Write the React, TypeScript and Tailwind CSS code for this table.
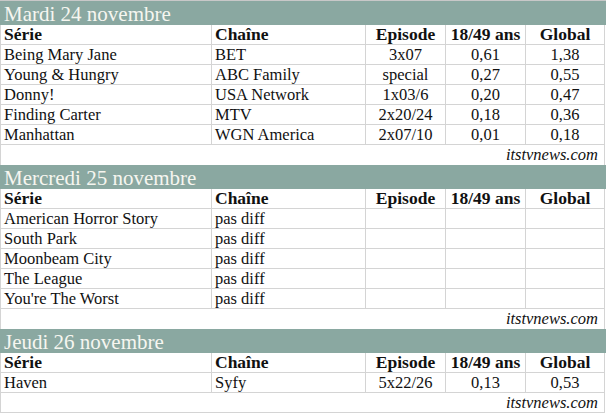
// Audiences US — three day tables (série, chaîne, épisode, 18/49, global)

type Row = { serie: string; chaine: string; ep: string; demo: string; global: string }

interface Day {
  title: string
  rows:  Row[]
}

const days: Day[] = [
  {
    title: 'Mardi 24 novembre',
    rows: [
      { serie: 'Being Mary Jane', chaine: 'BET',         ep: '3x07',    demo: '0,61', global: '1,38' },
      { serie: 'Young & Hungry',  chaine: 'ABC Family',  ep: 'special', demo: '0,27', global: '0,55' },
      { serie: 'Donny!',          chaine: 'USA Network', ep: '1x03/6',  demo: '0,20', global: '0,47' },
      { serie: 'Finding Carter',  chaine: 'MTV',         ep: '2x20/24', demo: '0,18', global: '0,36' },
      { serie: 'Manhattan',       chaine: 'WGN America', ep: '2x07/10', demo: '0,01', global: '0,18' },
    ],
  },
  {
    title: 'Mercredi 25 novembre',
    rows: [
      { serie: 'American Horror Story', chaine: 'pas diff', ep: '', demo: '', global: '' },
      { serie: 'South Park',            chaine: 'pas diff', ep: '', demo: '', global: '' },
      { serie: 'Moonbeam City',         chaine: 'pas diff', ep: '', demo: '', global: '' },
      { serie: 'The League',            chaine: 'pas diff', ep: '', demo: '', global: '' },
      { serie: "You're The Worst",      chaine: 'pas diff', ep: '', demo: '', global: '' },
    ],
  },
  {
    title: 'Jeudi 26 novembre',
    rows: [
      { serie: 'Haven', chaine: 'Syfy', ep: '5x22/26', demo: '0,13', global: '0,53' },
    ],
  },
]

const cell = 'h-5 border-r border-b border-[#d4d4d4] leading-[19px] whitespace-nowrap overflow-hidden'

function TableRow({ r, bold }: { r: Row; bold?: boolean }) {
  const w = bold ? 'font-bold text-[17.5px]' : 'text-[16.5px]'
  return (
    <div className="grid grid-cols-[211px_154px_80px_80px_79px] w-[605px] border-l border-[#d4d4d4]">
      <div className={`${cell} ${w} pl-[3px]`}>{r.serie}</div>
      <div className={`${cell} ${w} pl-[3px]`}>{r.chaine}</div>
      <div className={`${cell} ${w} text-center`}>{r.ep}</div>
      <div className={`${cell} ${w} text-center`}>{r.demo}</div>
      <div className={`${cell} ${w} text-center`}>{r.global}</div>
    </div>
  )
}

function DaySection({ day, last }: { day: Day; last: boolean }) {
  return (
    <div>
      <div className="h-6 bg-[#8aa8a1] text-[#f6f6f0] text-[21px] leading-[26px] pl-[4px]">
        {day.title}
      </div>
      <TableRow bold r={{ serie: 'Série', chaine: 'Chaîne', ep: 'Episode', demo: '18/49 ans', global: 'Global' }} />
      {day.rows.map(r => <TableRow key={r.serie} r={r} />)}
      <div className={`h-5 w-[605px] border-x border-[#d4d4d4] text-right italic text-[16.5px] pr-[6px] leading-[19px]
        ${last ? 'border-b' : ''}`}>
        itstvnews.com
      </div>
    </div>
  )
}

export default function App() {
  return (
    <div className="w-[606px] h-[413px] bg-white border-t border-[#c8c8c8] text-[#111] font-['Liberation_Serif',serif] overflow-hidden">
      {days.map((d, i) => <DaySection key={d.title} day={d} last={i === days.length - 1} />)}
    </div>
  )
}
